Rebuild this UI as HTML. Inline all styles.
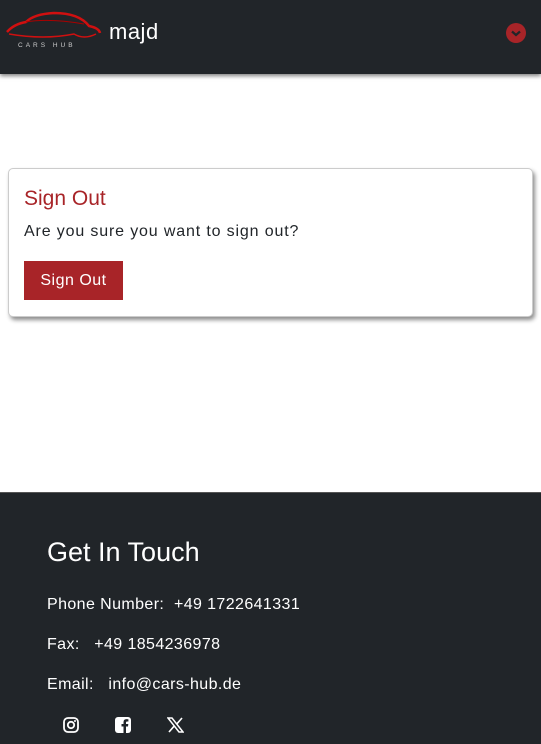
<!DOCTYPE html>
<html><head><meta charset="utf-8"><style>
*{margin:0;padding:0;box-sizing:border-box}
body{width:541px;height:744px;overflow:hidden;background:#fff;font-family:"Liberation Sans",sans-serif;position:relative}
.hdr{position:absolute;left:0;top:0;width:541px;height:74px;background:#212529;box-shadow:0 2px 4px rgba(0,0,0,.5)}
.user{position:absolute;left:109px;top:19px;color:#fff;font-size:22px;letter-spacing:0.5px}
.dd{position:absolute;left:506px;top:23px;width:20px;height:20px;border-radius:50%;background:#a82428}
.card{position:absolute;left:8px;top:168px;width:525px;height:149px;border:1px solid #ccc;border-radius:5px;box-shadow:2px 3px 4px rgba(0,0,0,.45);background:#fff}
.card h2{position:absolute;left:15px;top:18px;font-size:21px;font-weight:normal;color:#a82428}
.card p{position:absolute;left:15px;top:54px;font-size:16px;color:#212529;letter-spacing:0.85px}
.btn{position:absolute;left:15px;top:92px;width:99px;height:39px;background:#a82428;color:#fff;font-size:16px;text-align:center;line-height:39px;letter-spacing:0.5px}
.ftr{position:absolute;left:0;top:492px;width:541px;height:252px;background:#212529;color:#fff;border-top:1px solid #555}
.ftr h3{position:absolute;left:47px;top:44px;font-size:27px;font-weight:normal}
.ftr .l{position:absolute;left:47px;font-size:16px;letter-spacing:0.4px}
</style></head><body>
<div class="hdr">
<svg style="position:absolute;left:4px;top:8px" width="100" height="42" viewBox="0 0 100 42">
<path d="M3 24 Q10 16 22 14 Q30 6 50 5 Q75 5 85 18 Q95 20 96 25" fill="none" stroke="#d01010" stroke-width="2.5"/>
<path d="M5 26 Q40 32 70 26 Q80 32 92 26" fill="none" stroke="#d01010" stroke-width="1.5"/>
<path d="M22 14 Q45 10 80 16" fill="none" stroke="#a00" stroke-width="1"/>
<text x="14" y="39" fill="#ccc" font-size="6.5" letter-spacing="3" font-family="Liberation Sans">CARS HUB</text>
</svg>
<div class="user">majd</div>
<div class="dd"><svg width="20" height="20" viewBox="0 0 20 20"><path d="M6 8.5 L10 12 L14 8.5" fill="none" stroke="#212529" stroke-width="2.2"/></svg></div>
</div>
<div class="card">
<h2>Sign Out</h2>
<p>Are you sure you want to sign out?</p>
<div class="btn">Sign Out</div>
</div>
<div class="ftr">
<h3>Get In Touch</h3>
<div class="l" style="top:103px">Phone Number:&nbsp; +49 1722641331</div>
<div class="l" style="top:143px">Fax:&nbsp;&nbsp; +49 1854236978</div>
<div class="l" style="top:183px">Email:&nbsp;&nbsp; info@cars-hub.de</div>
<svg style="position:absolute;left:63px;top:224px" width="16" height="16" viewBox="0 0 16 16"><rect x="1" y="1" width="14" height="14" rx="4" fill="none" stroke="#fff" stroke-width="1.8"/><circle cx="8" cy="8" r="3.2" fill="none" stroke="#fff" stroke-width="1.8"/><circle cx="12" cy="4" r="1" fill="#fff"/></svg>
<svg style="position:absolute;left:115px;top:224px" width="16" height="16" viewBox="0 0 16 16"><rect x="0" y="0" width="16" height="16" rx="3" fill="#fff"/><path d="M11 16 V9.5 H13 L13.3 7 H11 V5.5 Q11 4.5 12 4.5 H13.4 V2.3 Q12.5 2.1 11.5 2.1 Q8.5 2.1 8.5 5.3 V7 H6.5 V9.5 H8.5 V16 Z" fill="#212529"/></svg>
<svg style="position:absolute;left:167px;top:224px" width="17" height="16" viewBox="0 0 17 16"><path d="M1 1 H5 L16 15 H12 Z" fill="none" stroke="#fff" stroke-width="1.5"/><path d="M15 1 L9.5 7.3 M2 15 L7.5 8.7" stroke="#fff" stroke-width="1.6"/></svg>
</div>
</body></html>
